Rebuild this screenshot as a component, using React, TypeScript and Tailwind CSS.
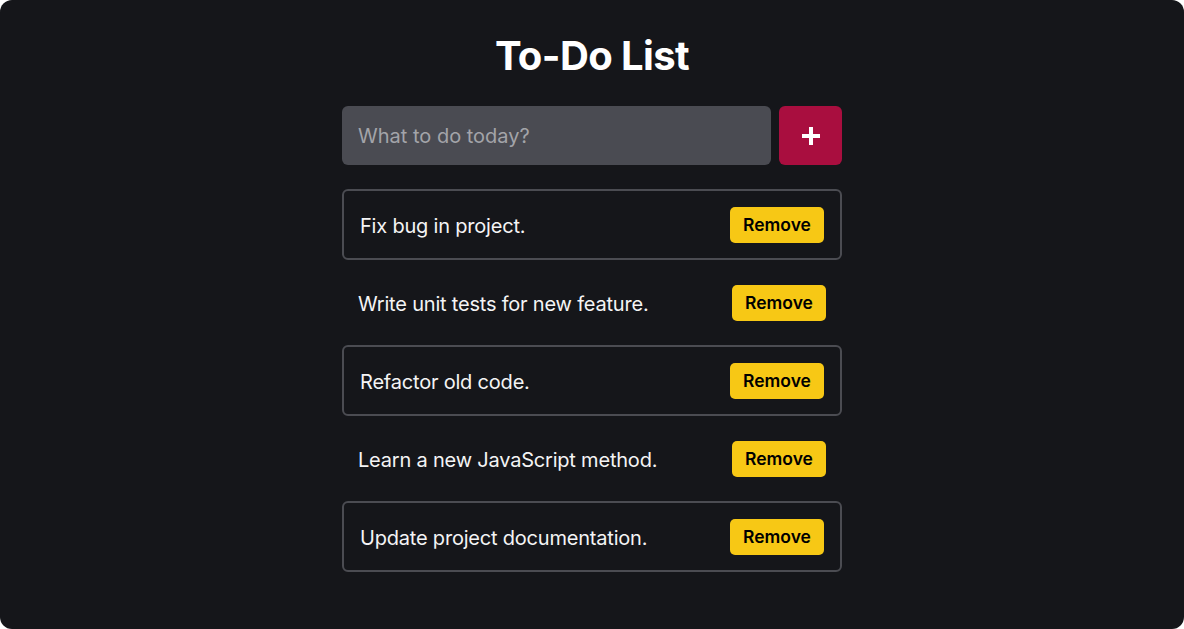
import { useState } from 'react';

type Todo = { id: number; text: string };

const initialTodos: Todo[] = [
  { id: 1, text: 'Fix bug in project.' },
  { id: 2, text: 'Write unit tests for new feature.' },
  { id: 3, text: 'Refactor old code.' },
  { id: 4, text: 'Learn a new JavaScript method.' },
  { id: 5, text: 'Update project documentation.' },
];

export default function App() {
  const [todos, setTodos] = useState<Todo[]>(initialTodos);
  const [draft, setDraft] = useState('');

  const addTodo = () => {
    if (!draft.trim()) return;
    setTodos([...todos, { id: Date.now(), text: draft.trim() }]);
    setDraft('');
  };

  const removeTodo = (id: number) => setTodos(todos.filter((t) => t.id !== id));

  return (
    <div className="w-[1184px] h-[629px] bg-white" style={{ fontFamily: 'Inter, "Noto Sans", sans-serif' }}>
      <div className="w-full h-full bg-[#15161a] rounded-xl flex flex-col items-center pt-[32px]">
        <h1 className="text-[40px] leading-[48px] font-bold text-white tracking-[-0.6px]">To-Do List</h1>

        <div className="w-[500px] mt-[26px] flex gap-2">
          <input
            value={draft}
            onChange={(e) => setDraft(e.target.value)}
            onKeyDown={(e) => e.key === 'Enter' && addTodo()}
            placeholder="What to do today?"
            className="flex-1 h-[59px] rounded-md bg-[#4a4b52] pl-4 text-[20px] text-white placeholder:text-[#a3a4a9] outline-none"
          />
          <button
            onClick={addTodo}
            className="w-[63px] h-[59px] rounded-md bg-[#a90e3f] flex items-center justify-center"
          >
            <svg width="20" height="20" viewBox="0 0 20 20">
              <path d="M10 1v18M1 10h18" stroke="white" strokeWidth="4" />
            </svg>
          </button>
        </div>

        <ul className="w-[500px] mt-6 flex flex-col gap-[7px]">
          {todos.map((todo, i) => (
            <li
              key={todo.id}
              className={`h-[71px] flex items-center justify-between px-4 rounded-md ${
                i % 2 === 0 ? 'border-2 border-[#4b4c52]' : ''
              }`}
            >
              <span className="text-[20px] text-[#f4f4f5] tracking-[-0.2px] mt-[3px]">{todo.text}</span>
              <button
                onClick={() => removeTodo(todo.id)}
                className="w-[94px] h-9 rounded-[5px] bg-[#f7c815] text-black text-[17.5px] font-semibold mt-[1px]"
              >
                Remove
              </button>
            </li>
          ))}
        </ul>
      </div>
    </div>
  );
}
